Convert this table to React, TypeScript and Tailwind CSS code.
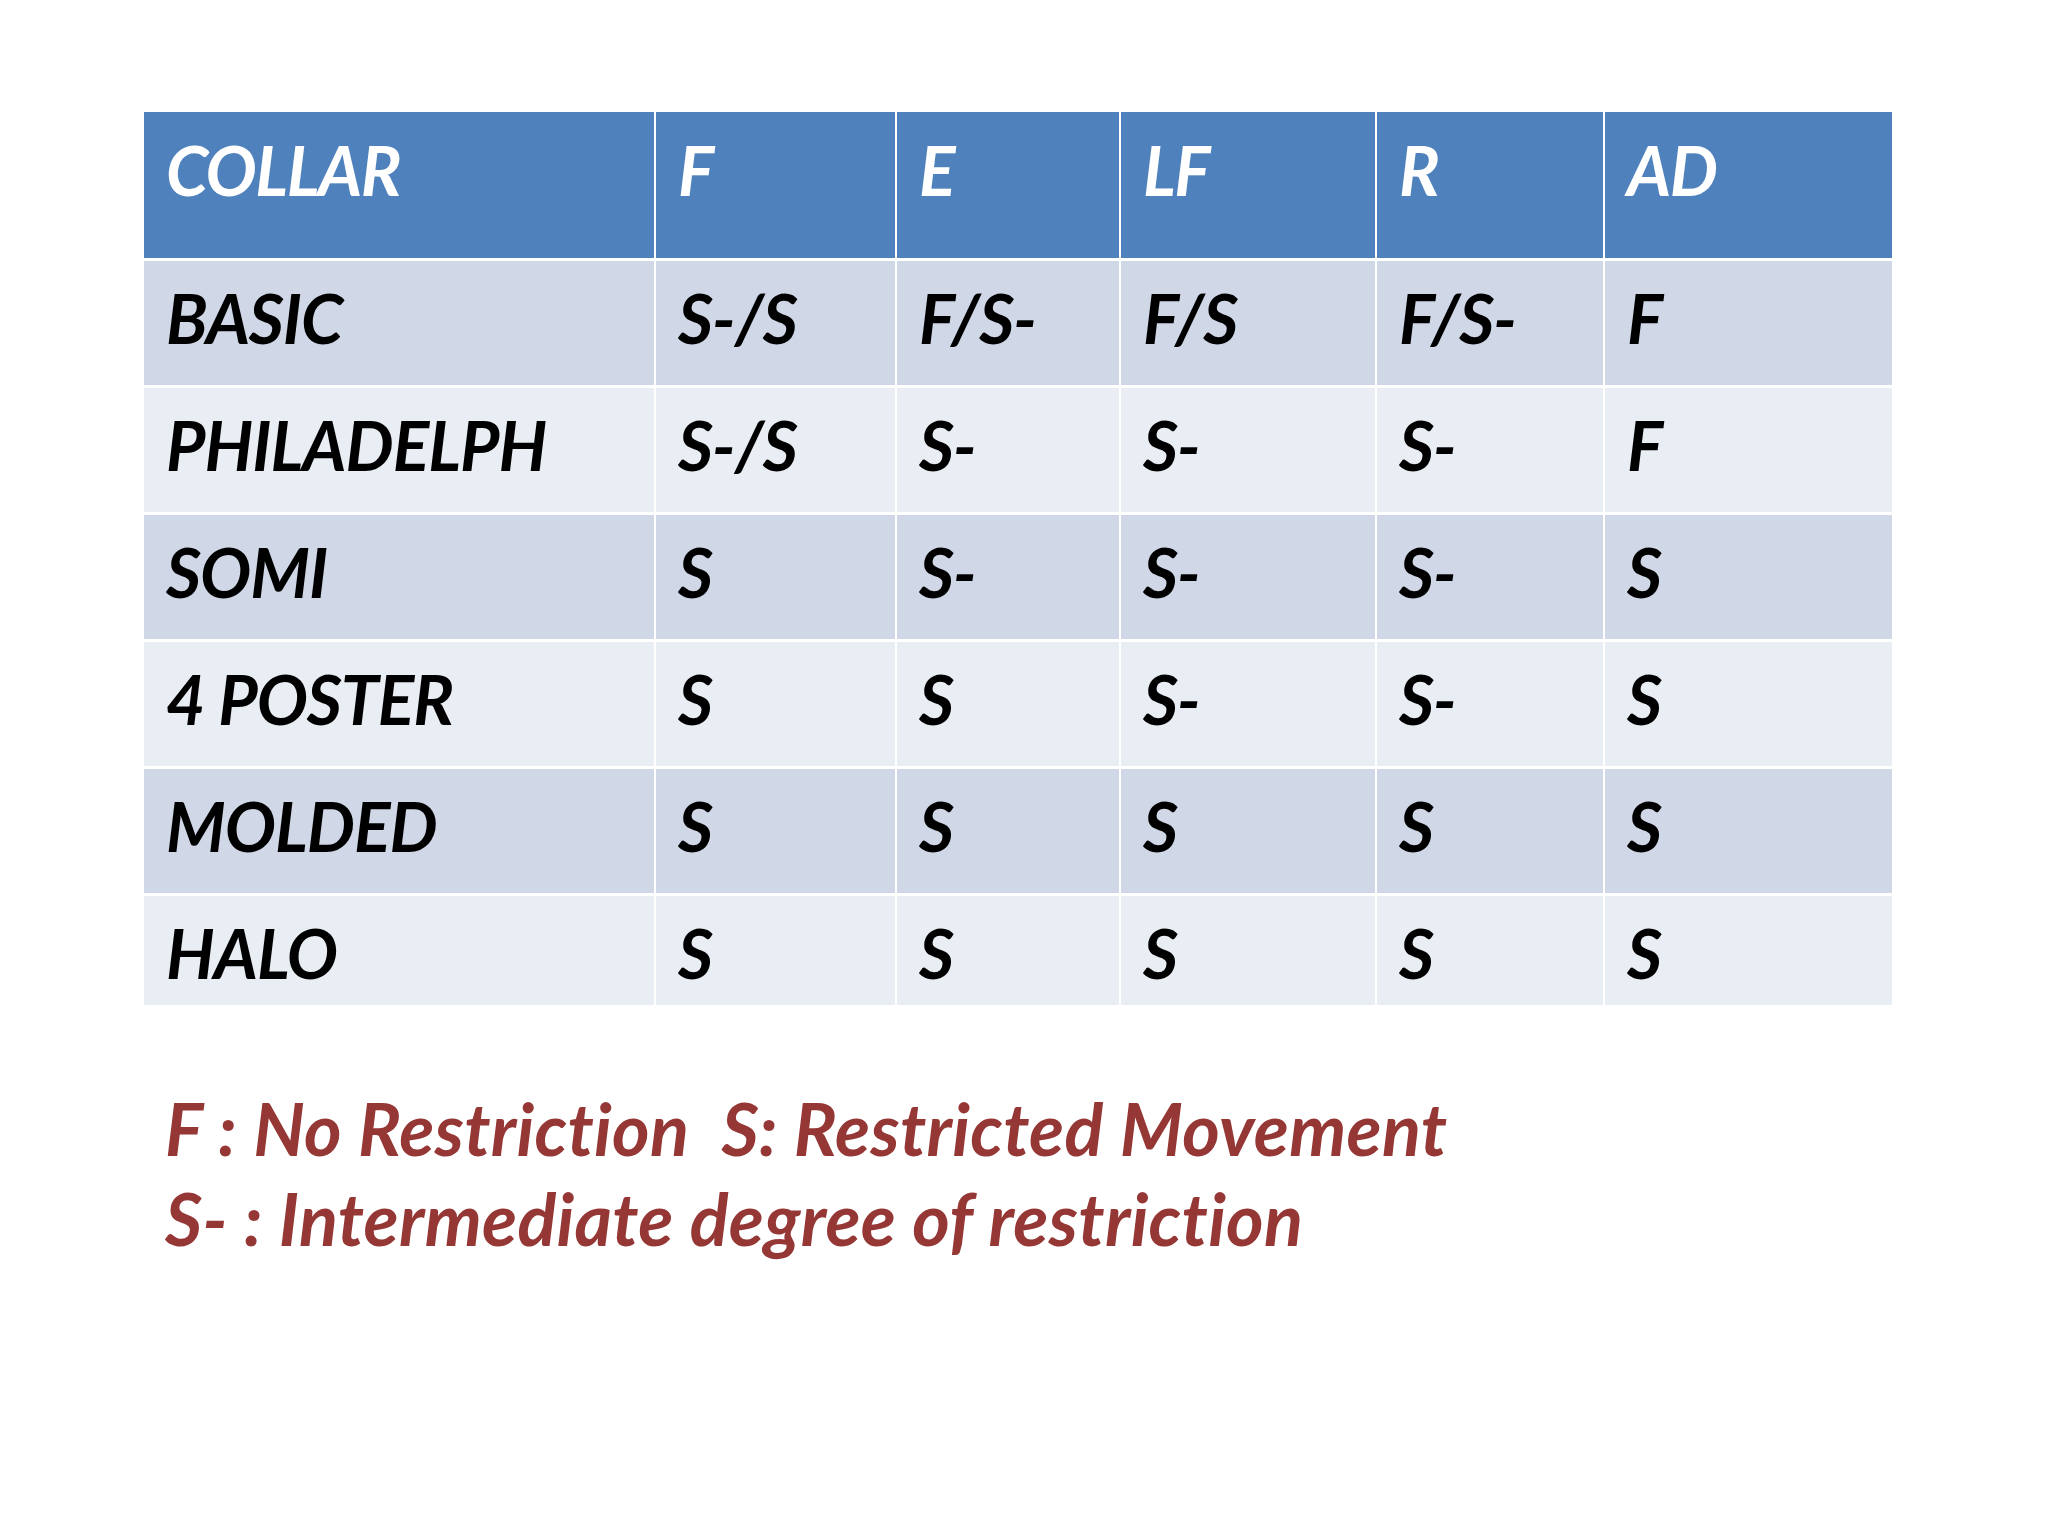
const columns = ['COLLAR', 'F', 'E', 'LF', 'R', 'AD']

const rows = [
  ['BASIC', 'S-/S', 'F/S-', 'F/S', 'F/S-', 'F'],
  ['PHILADELPH', 'S-/S', 'S-', 'S-', 'S-', 'F'],
  ['SOMI', 'S', 'S-', 'S-', 'S-', 'S'],
  ['4 POSTER', 'S', 'S', 'S-', 'S-', 'S'],
  ['MOLDED', 'S', 'S', 'S', 'S', 'S'],
  ['HALO', 'S', 'S', 'S', 'S', 'S'],
]

export default function App() {
  return (
    <div
      className="min-h-screen w-full bg-white pl-[144px] pt-[112px]"
      style={{ fontFamily: 'Lato, "Open Sans", sans-serif' }}
    >
      <div className="grid w-[1748px] grid-cols-[510px_239px_222px_254px_226px_287px] grid-rows-[146px_124px_124px_124px_124px_124px_109px] gap-x-[2px] gap-y-[3px] bg-white">
        {columns.map((col) => (
          <div
            key={col}
            className="bg-[#4f81bd] pl-[22px] pt-[17px] text-[68px] font-bold italic leading-[1.2] tracking-[-1.5px] text-white"
          >
            {col}
          </div>
        ))}
        {rows.map((row, i) =>
          row.map((cell, j) => (
            <div
              key={`${i}-${j}`}
              className={`${i % 2 === 0 ? 'bg-[#d0d8e8]' : 'bg-[#e9edf4]'} pl-[22px] pt-[16px] text-[68px] font-bold italic leading-[1.2] tracking-[-1px] text-black`}
            >
              {cell}
            </div>
          ))
        )}
      </div>

      {/* legend */}
      <div className="mt-[78px] pl-[21px] text-[72px] font-bold italic leading-[90px] tracking-[0.3px] text-[#953735]">
        <p className="whitespace-pre">F : No Restriction  S: Restricted Movement</p>
        <p>S- : Intermediate degree of restriction</p>
      </div>
    </div>
  )
}
